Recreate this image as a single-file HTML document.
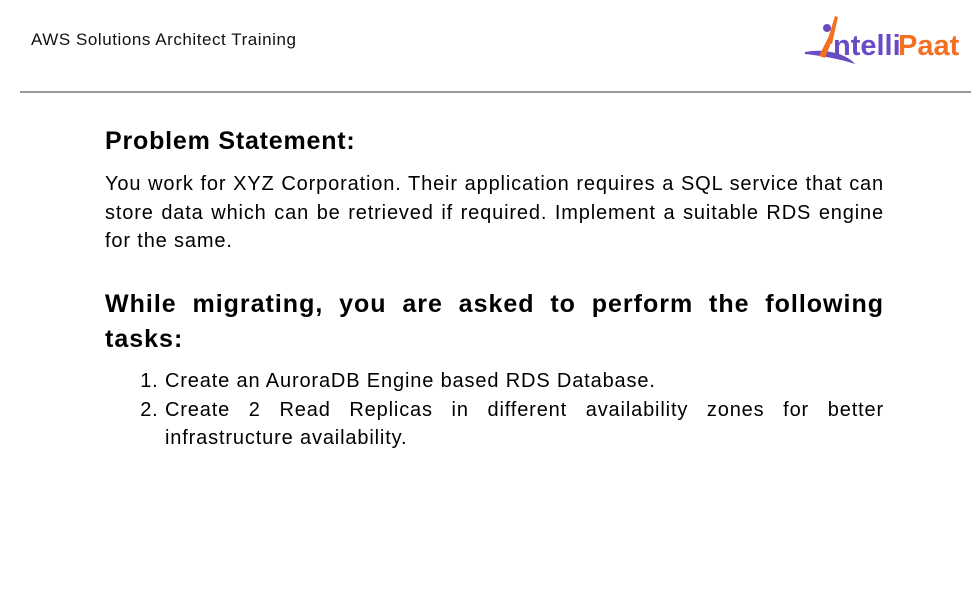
<!DOCTYPE html>
<html><head><meta charset="utf-8">
<style>
html,body{margin:0;padding:0;background:#fff;width:971px;height:607px;overflow:hidden;}
body{position:relative;font-family:"Liberation Sans",Arial,sans-serif;color:#000;}
.hdr{position:absolute;left:31px;top:30px;font-size:17px;letter-spacing:0.55px;color:#111;}
.rule{position:absolute;left:20px;top:91px;width:951px;height:2px;background:#9a9a9a;}
.c{position:absolute;left:105px;width:779px;z-index:1;}
h1{position:absolute;left:105px;top:127px;margin:0;font-size:25px;letter-spacing:0.8px;font-weight:bold;}
.p{top:170px;font-size:20px;letter-spacing:0.85px;line-height:28.5px;text-align:justify;}
h2{position:absolute;left:105px;top:287px;width:779px;margin:0;font-size:25px;letter-spacing:1px;line-height:35px;font-weight:bold;text-align:justify;z-index:1}
ol{position:absolute;left:105px;top:367px;width:779px;margin:0;padding:0 0 0 60px;box-sizing:border-box;font-size:20px;letter-spacing:0.85px;line-height:28.5px;z-index:1}
ol li{text-align:justify;padding-left:0;}
.logo{position:absolute;left:805px;top:12px;}
</style></head><body>
<div class="hdr">AWS Solutions Architect Training</div>
<div class="logo">
<svg width="155" height="56" viewBox="0 0 155 56">
<path d="M0 40 C20 36 42 42 50 52 C38 48 20 44 0 42Z" fill="#6a4bc4"/>
<path d="M14 44 L24 24 L28 26 L20 46Z" fill="#f37021"/>
<path d="M22 30 L30 4 L33 5 L27 32Z" fill="#f37021"/>
<circle cx="22" cy="16" r="4" fill="#6a4bc4"/>
<text x="28" y="43" font-family="Liberation Sans,Arial,sans-serif" font-weight="bold" font-size="29" fill="#6a4bc4">ntelli</text>
<text x="93" y="43" font-family="Liberation Sans,Arial,sans-serif" font-weight="bold" font-size="29" fill="#f37021">Paat</text>
</svg>
</div>
<div class="rule"></div>
<h1>Problem Statement:</h1>
<div class="c p">You work for XYZ Corporation. Their application requires a SQL service that can store data which can be retrieved if required. Implement a suitable RDS engine for the same.</div>
<h2>While migrating, you are asked to perform the following tasks:</h2>
<ol>
<li>Create an AuroraDB Engine based RDS Database.</li>
<li>Create 2 Read Replicas in different availability zones for better infrastructure availability.</li>
</ol>
</body></html>
